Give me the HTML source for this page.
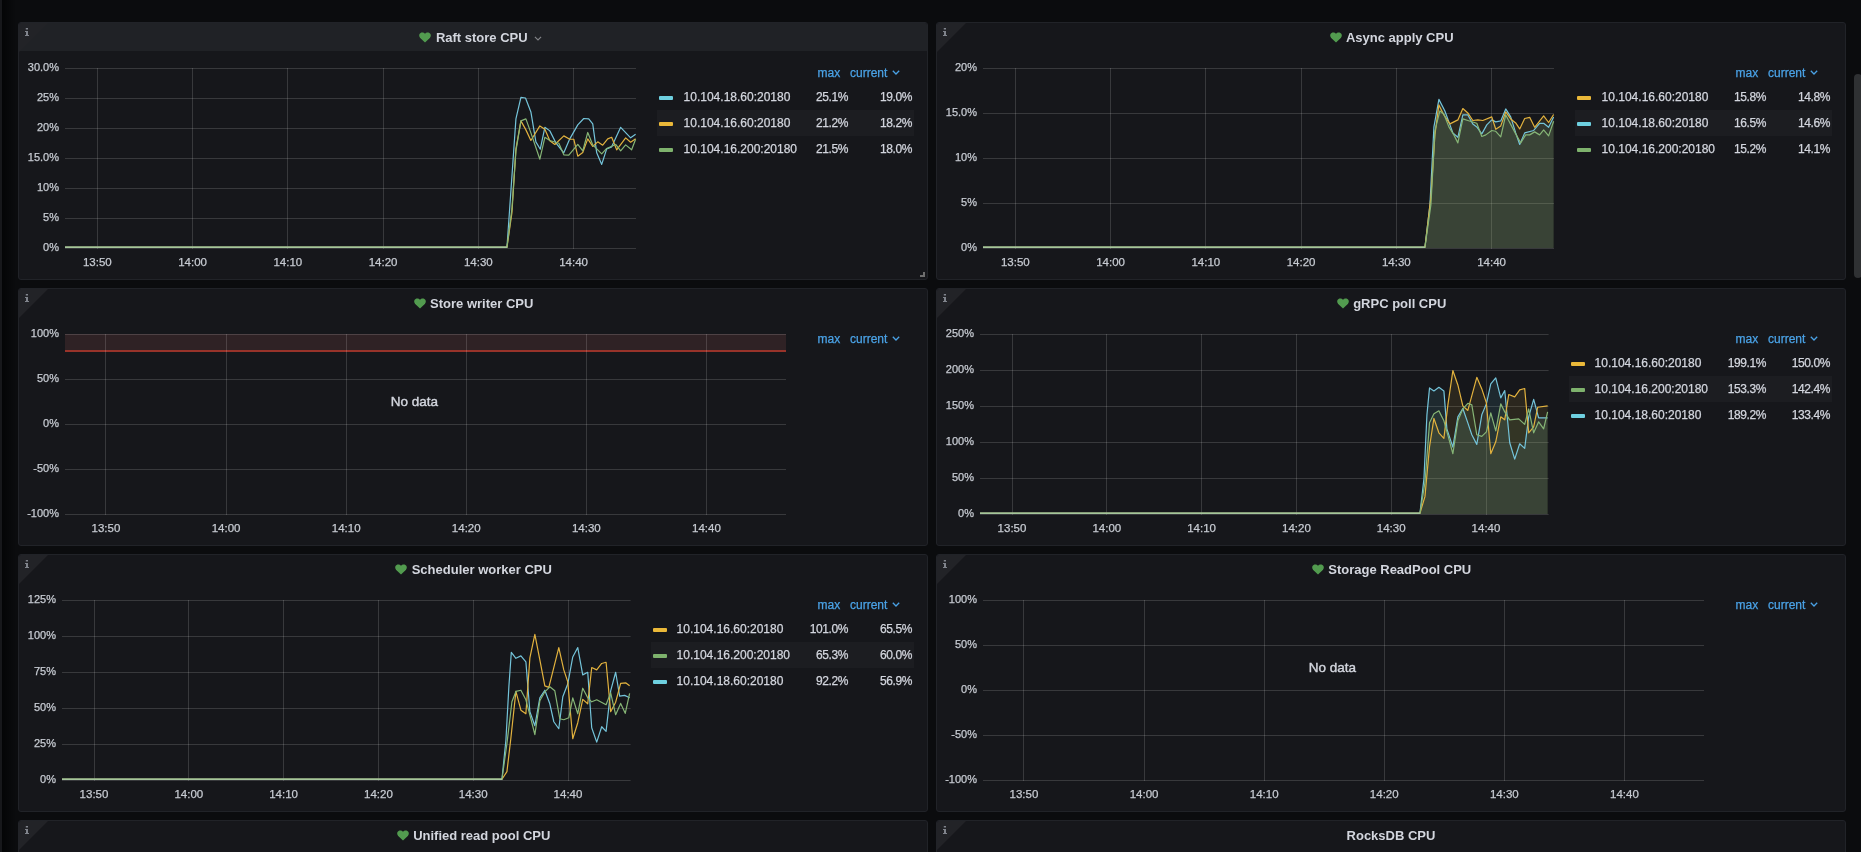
<!DOCTYPE html>
<html><head><meta charset="utf-8"><style>
html,body{margin:0;padding:0;}
body{will-change:transform;-webkit-text-stroke-width:0.25px;width:1861px;height:852px;overflow:hidden;background:#0b0c0e;position:relative;font-family:"Liberation Sans",sans-serif;}
.strip{position:absolute;left:0;top:0;width:2px;height:852px;background:#17181b;}
.sb{position:absolute;left:1854px;top:74px;width:8px;height:204px;background:#2f3133;border-radius:4px;}
.p{position:absolute;width:908px;height:256px;background:#16171b;border:1px solid #212328;border-radius:3px;overflow:hidden;}
.hov{position:absolute;left:0;top:0;width:908px;height:28px;background:#202226;}
.tri{position:absolute;left:0;top:0;width:0;height:0;border-top:29px solid #222327;border-right:29px solid transparent;}
.info{position:absolute;left:6px;top:5px;}
.rz{position:absolute;background:#6e6e6e;}
.title{-webkit-text-stroke-width:0;position:absolute;left:0;top:5.6px;width:908px;text-align:center;font-weight:bold;font-size:13px;line-height:18px;color:#d3d6de;white-space:nowrap;}
.title svg{vertical-align:-1px;margin-right:5.5px;position:relative;left:1.1px;}
svg.ch{position:absolute;left:0;top:0;}
.lg{position:absolute;font-size:12px;line-height:14px;color:#d3d6de;white-space:nowrap;}
.lh{position:absolute;font-size:12px;line-height:14px;color:#4aa2e6;white-space:nowrap;}
.nd{-webkit-text-stroke-width:0.4px;position:absolute;font-size:13.5px;line-height:16px;color:#d3d6de;white-space:nowrap;}
.stripe{position:absolute;background:#1c1d21;}
.sw{position:absolute;width:14px;height:4px;border-radius:1px;}
.val{position:absolute;font-size:12px;line-height:14px;color:#d3d6de;white-space:nowrap;letter-spacing:-0.4px;text-align:right;}
</style></head><body>
<div class="strip"></div>
<div style="position:absolute;left:2px;top:0;width:14px;height:852px;background:linear-gradient(to right,#040506,#0b0c0e)"></div>
<div class="sb"></div>

<div class="p" style="left:18px;top:22px">
<div class="hov"></div>
<div class="rz" style="left:904px;top:249px;width:2px;height:5px"></div><div class="rz" style="left:901px;top:252px;width:5px;height:2px"></div>
<div class="tri"></div>
<svg class="info" width="5" height="9" viewBox="0 0 5 9"><rect x="0.8" y="0" width="2.2" height="1.5" fill="#80848c"/><path d="M0 3 H3 V7 H4 V8 H0 V7 H1 V4 H0 Z" fill="#80848c"/></svg>
<div class="title"><svg width="12" height="11" viewBox="0 0 12 11"><path d="M6 10.6 L1.2 5.9 C-0.3 4.4 -0.1 1.9 1.6 0.9 C3.1 0 4.9 0.5 6 1.8 C7.1 0.5 8.9 0 10.4 0.9 C12.1 1.9 12.3 4.4 10.8 5.9 Z" fill="#529b4f"/></svg>Raft store CPU</div><svg width="8" height="5" viewBox="0 0 8 5" style="position:absolute;left:514.6px;top:12.5px"><path d="M0.9 0.9 L4 3.9 L7.1 0.9" stroke="#85868a" stroke-width="1.1" fill="none"/></svg>
<svg class="ch" width="908" height="256">
<rect x="46" y="45" width="571" height="1" fill="rgba(255,255,255,0.15)"/>
<rect x="46" y="75" width="571" height="1" fill="rgba(255,255,255,0.15)"/>
<rect x="46" y="105" width="571" height="1" fill="rgba(255,255,255,0.15)"/>
<rect x="46" y="135" width="571" height="1" fill="rgba(255,255,255,0.15)"/>
<rect x="46" y="165" width="571" height="1" fill="rgba(255,255,255,0.15)"/>
<rect x="46" y="195" width="571" height="1" fill="rgba(255,255,255,0.15)"/>
<rect x="46" y="225" width="571" height="1" fill="rgba(255,255,255,0.15)"/>
<rect x="78" y="45" width="1" height="181" fill="rgba(255,255,255,0.15)"/>
<rect x="173" y="45" width="1" height="181" fill="rgba(255,255,255,0.15)"/>
<rect x="268" y="45" width="1" height="181" fill="rgba(255,255,255,0.15)"/>
<rect x="364" y="45" width="1" height="181" fill="rgba(255,255,255,0.15)"/>
<rect x="459" y="45" width="1" height="181" fill="rgba(255,255,255,0.15)"/>
<rect x="554" y="45" width="1" height="181" fill="rgba(255,255,255,0.15)"/>
</svg>
<div class="lg" style="left:0;width:40px;top:36.5px;text-align:right;font-size:11px;color:#c7cbd2">30.0%</div>
<div class="lg" style="left:0;width:40px;top:66.5px;text-align:right;font-size:11px;color:#c7cbd2">25%</div>
<div class="lg" style="left:0;width:40px;top:96.5px;text-align:right;font-size:11px;color:#c7cbd2">20%</div>
<div class="lg" style="left:0;width:40px;top:126.5px;text-align:right;font-size:11px;color:#c7cbd2">15.0%</div>
<div class="lg" style="left:0;width:40px;top:156.5px;text-align:right;font-size:11px;color:#c7cbd2">10%</div>
<div class="lg" style="left:0;width:40px;top:186.5px;text-align:right;font-size:11px;color:#c7cbd2">5%</div>
<div class="lg" style="left:0;width:40px;top:216.5px;text-align:right;font-size:11px;color:#c7cbd2">0%</div>
<div class="lg" style="left:58.3px;width:40px;top:231.5px;text-align:center;font-size:11.5px;color:#c7cbd2">13:50</div>
<div class="lg" style="left:153.55px;width:40px;top:231.5px;text-align:center;font-size:11.5px;color:#c7cbd2">14:00</div>
<div class="lg" style="left:248.8px;width:40px;top:231.5px;text-align:center;font-size:11.5px;color:#c7cbd2">14:10</div>
<div class="lg" style="left:344.05px;width:40px;top:231.5px;text-align:center;font-size:11.5px;color:#c7cbd2">14:20</div>
<div class="lg" style="left:439.3px;width:40px;top:231.5px;text-align:center;font-size:11.5px;color:#c7cbd2">14:30</div>
<div class="lg" style="left:534.55px;width:40px;top:231.5px;text-align:center;font-size:11.5px;color:#c7cbd2">14:40</div>
<div class="lh" style="left:798.5px;top:43.1px">max</div>
<div class="lh" style="left:831px;top:43.1px">current<svg width="8" height="5" viewBox="0 0 8 5" style="margin-left:5px;vertical-align:2px"><path d="M0.8 0.8 L4 4 L7.2 0.8" stroke="#4aa2e6" stroke-width="1.3" fill="none"/></svg></div>
<div class="stripe" style="left:638px;top:87px;width:257px;height:26px"></div>
<div class="sw" style="left:640px;top:72.5px;background:#6ED0E0"></div>
<div class="lg" style="left:664.6px;top:67px">10.104.18.60:20180</div>
<div class="val" style="left:729px;width:100px;top:67px">25.1%</div>
<div class="val" style="left:793px;width:100px;top:67px">19.0%</div>
<div class="sw" style="left:640px;top:98.5px;background:#EAB839"></div>
<div class="lg" style="left:664.6px;top:93px">10.104.16.60:20180</div>
<div class="val" style="left:729px;width:100px;top:93px">21.2%</div>
<div class="val" style="left:793px;width:100px;top:93px">18.2%</div>
<div class="sw" style="left:640px;top:124.5px;background:#7EB26D"></div>
<div class="lg" style="left:664.6px;top:119px">10.104.16.200:20180</div>
<div class="val" style="left:729px;width:100px;top:119px">21.5%</div>
<div class="val" style="left:793px;width:100px;top:119px">18.0%</div>
</div>
<svg style="position:absolute;left:0;top:0;pointer-events:none" width="1861" height="852">
<path d="M65 247.25 L506.96 247.25 L515.93 118.91 L520.92 97.37 L525.51 97.97 L530.89 111.93 L535.88 141.85 L540.27 149.23 L544.86 127.29 L549.84 130.88 L555.83 142.85 L563.81 152.82 L569.79 138.86 L577.77 124.9 L583.76 118.51 L588.74 118.91 L592.73 123.9 L596.72 152.82 L601.71 164.39 L606.7 148.83 L611.68 146.84 L620.66 127.29 L630.63 137.86 L635.62 134.27" fill="none" stroke="#74c4da" stroke-width="1.2" stroke-linejoin="round"/>
<path d="M65 247.25 L506.96 247.25 L511.94 212.67 L515.93 148.83 L520.92 120.91 L525.91 129.88 L530.89 140.46 L539.87 125.89 L544.86 129.28 L549.84 140.85 L554.83 144.45 L563.81 135.87 L569.79 139.26 L573.78 139.26 L577.77 156.21 L582.76 152.42 L587.75 138.86 L592.73 146.44 L597.72 141.85 L602.71 145.24 L607.69 138.86 L611.68 137.26 L616.67 149.83 L625.65 137.86 L630.63 142.25 L635.62 138.86" fill="none" stroke="#e2b23e" stroke-width="1.2" stroke-linejoin="round"/>
<path d="M65 247.25 L506.96 247.25 L511.94 208.68 L515.93 150.83 L520.92 120.91 L525.91 118.91 L530.89 132.88 L539.87 159.21 L544.86 137.26 L549.84 140.46 L558.82 143.25 L563.81 154.82 L568.8 155.22 L577.77 144.45 L582.76 150.83 L587.75 132.48 L592.73 144.84 L601.71 153.82 L606.7 148.44 L615.67 144.45 L620.66 150.83 L625.65 144.84 L631.63 149.83 L635.62 139.26" fill="none" stroke="#86b576" stroke-width="1.2" stroke-linejoin="round"/>
<path d="M65 247.25 H506.96" stroke="#a5c69c" stroke-width="1.6" fill="none"/>
</svg>
<div class="p" style="left:936px;top:22px">
<div class="tri"></div>
<svg class="info" width="5" height="9" viewBox="0 0 5 9"><rect x="0.8" y="0" width="2.2" height="1.5" fill="#80848c"/><path d="M0 3 H3 V7 H4 V8 H0 V7 H1 V4 H0 Z" fill="#80848c"/></svg>
<div class="title"><svg width="12" height="11" viewBox="0 0 12 11"><path d="M6 10.6 L1.2 5.9 C-0.3 4.4 -0.1 1.9 1.6 0.9 C3.1 0 4.9 0.5 6 1.8 C7.1 0.5 8.9 0 10.4 0.9 C12.1 1.9 12.3 4.4 10.8 5.9 Z" fill="#529b4f"/></svg>Async apply CPU</div>
<svg class="ch" width="908" height="256">
<rect x="46" y="45" width="571" height="1" fill="rgba(255,255,255,0.15)"/>
<rect x="46" y="90" width="571" height="1" fill="rgba(255,255,255,0.15)"/>
<rect x="46" y="135" width="571" height="1" fill="rgba(255,255,255,0.15)"/>
<rect x="46" y="180" width="571" height="1" fill="rgba(255,255,255,0.15)"/>
<rect x="46" y="225" width="571" height="1" fill="rgba(255,255,255,0.15)"/>
<rect x="78" y="45" width="1" height="181" fill="rgba(255,255,255,0.15)"/>
<rect x="173" y="45" width="1" height="181" fill="rgba(255,255,255,0.15)"/>
<rect x="268" y="45" width="1" height="181" fill="rgba(255,255,255,0.15)"/>
<rect x="364" y="45" width="1" height="181" fill="rgba(255,255,255,0.15)"/>
<rect x="459" y="45" width="1" height="181" fill="rgba(255,255,255,0.15)"/>
<rect x="554" y="45" width="1" height="181" fill="rgba(255,255,255,0.15)"/>
</svg>
<div class="lg" style="left:0;width:40px;top:36.5px;text-align:right;font-size:11px;color:#c7cbd2">20%</div>
<div class="lg" style="left:0;width:40px;top:81.5px;text-align:right;font-size:11px;color:#c7cbd2">15.0%</div>
<div class="lg" style="left:0;width:40px;top:126.5px;text-align:right;font-size:11px;color:#c7cbd2">10%</div>
<div class="lg" style="left:0;width:40px;top:171.5px;text-align:right;font-size:11px;color:#c7cbd2">5%</div>
<div class="lg" style="left:0;width:40px;top:216.5px;text-align:right;font-size:11px;color:#c7cbd2">0%</div>
<div class="lg" style="left:58.3px;width:40px;top:231.5px;text-align:center;font-size:11.5px;color:#c7cbd2">13:50</div>
<div class="lg" style="left:153.55px;width:40px;top:231.5px;text-align:center;font-size:11.5px;color:#c7cbd2">14:00</div>
<div class="lg" style="left:248.8px;width:40px;top:231.5px;text-align:center;font-size:11.5px;color:#c7cbd2">14:10</div>
<div class="lg" style="left:344.05px;width:40px;top:231.5px;text-align:center;font-size:11.5px;color:#c7cbd2">14:20</div>
<div class="lg" style="left:439.3px;width:40px;top:231.5px;text-align:center;font-size:11.5px;color:#c7cbd2">14:30</div>
<div class="lg" style="left:534.55px;width:40px;top:231.5px;text-align:center;font-size:11.5px;color:#c7cbd2">14:40</div>
<div class="lh" style="left:798.5px;top:43.1px">max</div>
<div class="lh" style="left:831px;top:43.1px">current<svg width="8" height="5" viewBox="0 0 8 5" style="margin-left:5px;vertical-align:2px"><path d="M0.8 0.8 L4 4 L7.2 0.8" stroke="#4aa2e6" stroke-width="1.3" fill="none"/></svg></div>
<div class="stripe" style="left:638px;top:87px;width:257px;height:26px"></div>
<div class="sw" style="left:640px;top:72.5px;background:#EAB839"></div>
<div class="lg" style="left:664.6px;top:67px">10.104.16.60:20180</div>
<div class="val" style="left:729px;width:100px;top:67px">15.8%</div>
<div class="val" style="left:793px;width:100px;top:67px">14.8%</div>
<div class="sw" style="left:640px;top:98.5px;background:#6ED0E0"></div>
<div class="lg" style="left:664.6px;top:93px">10.104.18.60:20180</div>
<div class="val" style="left:729px;width:100px;top:93px">16.5%</div>
<div class="val" style="left:793px;width:100px;top:93px">14.6%</div>
<div class="sw" style="left:640px;top:124.5px;background:#7EB26D"></div>
<div class="lg" style="left:664.6px;top:119px">10.104.16.200:20180</div>
<div class="val" style="left:729px;width:100px;top:119px">15.2%</div>
<div class="val" style="left:793px;width:100px;top:119px">14.1%</div>
</div>
<svg style="position:absolute;left:0;top:0;pointer-events:none" width="1861" height="852">
<path d="M983 248 L983 247.25 L1424.94 247.25 L1429.93 204.7 L1433.92 126.9 L1438.9 99.36 L1444.89 110.94 L1452.87 132.88 L1457.86 137.27 L1462.84 114.93 L1467.83 114.93 L1472.82 123.9 L1476.81 126.9 L1481.8 133.88 L1486.78 124.9 L1491.77 119.91 L1495.76 121.91 L1500.75 120.91 L1505.74 108.94 L1510.72 116.92 L1515.71 132.88 L1519.7 144.45 L1524.69 132.88 L1533.67 130.49 L1539.65 123.3 L1543.64 123.3 L1548.63 127.29 L1553.62 116.92 L1553.62 248 Z" fill="#6ED0E0" fill-opacity="0.1"/>
<path d="M983 248 L983 247.25 L1424.94 247.25 L1430.92 196.72 L1434.91 134.88 L1438.9 104.95 L1443.89 114.93 L1449.88 123.9 L1457.86 119.91 L1462.84 108.54 L1467.83 112.93 L1472.82 120.51 L1477.81 119.91 L1482.79 120.51 L1491.77 116.92 L1495.76 129.29 L1500.75 125.9 L1505.74 111.93 L1510.72 118.92 L1515.71 122.91 L1519.7 128.89 L1524.69 118.52 L1529.68 117.32 L1534.66 127.29 L1543.64 115.92 L1548.63 122.51 L1553.62 114.53 L1553.62 248 Z" fill="#EAB839" fill-opacity="0.1"/>
<path d="M983 248 L983 247.25 L1424.94 247.25 L1430.92 204.7 L1434.91 130.89 L1439.9 110.94 L1443.89 113.93 L1448.88 126.9 L1453.87 134.88 L1457.86 142.86 L1462.84 118.92 L1467.83 120.51 L1476.81 123.3 L1481.8 136.47 L1485.79 134.88 L1491.77 130.49 L1495.76 131.28 L1500.75 136.87 L1505.74 114.93 L1515.71 133.88 L1520.7 142.86 L1525.69 134.88 L1529.68 134.88 L1534.66 131.88 L1539.65 134.88 L1543.64 129.89 L1548.63 135.87 L1553.62 121.31 L1553.62 248 Z" fill="#7EB26D" fill-opacity="0.1"/>
<path d="M983 247.25 L1424.94 247.25 L1429.93 204.7 L1433.92 126.9 L1438.9 99.36 L1444.89 110.94 L1452.87 132.88 L1457.86 137.27 L1462.84 114.93 L1467.83 114.93 L1472.82 123.9 L1476.81 126.9 L1481.8 133.88 L1486.78 124.9 L1491.77 119.91 L1495.76 121.91 L1500.75 120.91 L1505.74 108.94 L1510.72 116.92 L1515.71 132.88 L1519.7 144.45 L1524.69 132.88 L1533.67 130.49 L1539.65 123.3 L1543.64 123.3 L1548.63 127.29 L1553.62 116.92" fill="none" stroke="#74c4da" stroke-width="1.2" stroke-linejoin="round"/>
<path d="M983 247.25 L1424.94 247.25 L1430.92 196.72 L1434.91 134.88 L1438.9 104.95 L1443.89 114.93 L1449.88 123.9 L1457.86 119.91 L1462.84 108.54 L1467.83 112.93 L1472.82 120.51 L1477.81 119.91 L1482.79 120.51 L1491.77 116.92 L1495.76 129.29 L1500.75 125.9 L1505.74 111.93 L1510.72 118.92 L1515.71 122.91 L1519.7 128.89 L1524.69 118.52 L1529.68 117.32 L1534.66 127.29 L1543.64 115.92 L1548.63 122.51 L1553.62 114.53" fill="none" stroke="#e2b23e" stroke-width="1.2" stroke-linejoin="round"/>
<path d="M983 247.25 L1424.94 247.25 L1430.92 204.7 L1434.91 130.89 L1439.9 110.94 L1443.89 113.93 L1448.88 126.9 L1453.87 134.88 L1457.86 142.86 L1462.84 118.92 L1467.83 120.51 L1476.81 123.3 L1481.8 136.47 L1485.79 134.88 L1491.77 130.49 L1495.76 131.28 L1500.75 136.87 L1505.74 114.93 L1515.71 133.88 L1520.7 142.86 L1525.69 134.88 L1529.68 134.88 L1534.66 131.88 L1539.65 134.88 L1543.64 129.89 L1548.63 135.87 L1553.62 121.31" fill="none" stroke="#86b576" stroke-width="1.2" stroke-linejoin="round"/>
<path d="M983 247.25 H1424.94" stroke="#a5c69c" stroke-width="1.6" fill="none"/>
</svg>
<div class="p" style="left:18px;top:288px">
<div class="tri"></div>
<svg class="info" width="5" height="9" viewBox="0 0 5 9"><rect x="0.8" y="0" width="2.2" height="1.5" fill="#80848c"/><path d="M0 3 H3 V7 H4 V8 H0 V7 H1 V4 H0 Z" fill="#80848c"/></svg>
<div class="title"><svg width="12" height="11" viewBox="0 0 12 11"><path d="M6 10.6 L1.2 5.9 C-0.3 4.4 -0.1 1.9 1.6 0.9 C3.1 0 4.9 0.5 6 1.8 C7.1 0.5 8.9 0 10.4 0.9 C12.1 1.9 12.3 4.4 10.8 5.9 Z" fill="#529b4f"/></svg>Store writer CPU</div>
<svg class="ch" width="908" height="256">
<rect x="46" y="45" width="721" height="18" fill="rgba(234,112,112,0.12)"/>
<rect x="46" y="61" width="721" height="2" fill="#98332a"/>
<rect x="46" y="45" width="721" height="1" fill="rgba(255,255,255,0.15)"/>
<rect x="46" y="90" width="721" height="1" fill="rgba(255,255,255,0.15)"/>
<rect x="46" y="135" width="721" height="1" fill="rgba(255,255,255,0.15)"/>
<rect x="46" y="180" width="721" height="1" fill="rgba(255,255,255,0.15)"/>
<rect x="46" y="225" width="721" height="1" fill="rgba(255,255,255,0.15)"/>
<rect x="86" y="45" width="1" height="181" fill="rgba(255,255,255,0.15)"/>
<rect x="207" y="45" width="1" height="181" fill="rgba(255,255,255,0.15)"/>
<rect x="327" y="45" width="1" height="181" fill="rgba(255,255,255,0.15)"/>
<rect x="447" y="45" width="1" height="181" fill="rgba(255,255,255,0.15)"/>
<rect x="567" y="45" width="1" height="181" fill="rgba(255,255,255,0.15)"/>
<rect x="687" y="45" width="1" height="181" fill="rgba(255,255,255,0.15)"/>
</svg>
<div class="lg" style="left:0;width:40px;top:36.5px;text-align:right;font-size:11px;color:#c7cbd2">100%</div>
<div class="lg" style="left:0;width:40px;top:81.5px;text-align:right;font-size:11px;color:#c7cbd2">50%</div>
<div class="lg" style="left:0;width:40px;top:126.5px;text-align:right;font-size:11px;color:#c7cbd2">0%</div>
<div class="lg" style="left:0;width:40px;top:171.5px;text-align:right;font-size:11px;color:#c7cbd2">-50%</div>
<div class="lg" style="left:0;width:40px;top:216.5px;text-align:right;font-size:11px;color:#c7cbd2">-100%</div>
<div class="lg" style="left:66.95px;width:40px;top:231.5px;text-align:center;font-size:11.5px;color:#c7cbd2">13:50</div>
<div class="lg" style="left:187.05px;width:40px;top:231.5px;text-align:center;font-size:11.5px;color:#c7cbd2">14:00</div>
<div class="lg" style="left:307.15px;width:40px;top:231.5px;text-align:center;font-size:11.5px;color:#c7cbd2">14:10</div>
<div class="lg" style="left:427.25px;width:40px;top:231.5px;text-align:center;font-size:11.5px;color:#c7cbd2">14:20</div>
<div class="lg" style="left:547.35px;width:40px;top:231.5px;text-align:center;font-size:11.5px;color:#c7cbd2">14:30</div>
<div class="lg" style="left:667.45px;width:40px;top:231.5px;text-align:center;font-size:11.5px;color:#c7cbd2">14:40</div>
<div class="lh" style="left:798.5px;top:43.1px">max</div>
<div class="lh" style="left:831px;top:43.1px">current<svg width="8" height="5" viewBox="0 0 8 5" style="margin-left:5px;vertical-align:2px"><path d="M0.8 0.8 L4 4 L7.2 0.8" stroke="#4aa2e6" stroke-width="1.3" fill="none"/></svg></div>
<div class="nd" style="left:345.5px;width:100px;top:104.5px;text-align:center">No data</div>
</div>
<div class="p" style="left:936px;top:288px">
<div class="tri"></div>
<svg class="info" width="5" height="9" viewBox="0 0 5 9"><rect x="0.8" y="0" width="2.2" height="1.5" fill="#80848c"/><path d="M0 3 H3 V7 H4 V8 H0 V7 H1 V4 H0 Z" fill="#80848c"/></svg>
<div class="title"><svg width="12" height="11" viewBox="0 0 12 11"><path d="M6 10.6 L1.2 5.9 C-0.3 4.4 -0.1 1.9 1.6 0.9 C3.1 0 4.9 0.5 6 1.8 C7.1 0.5 8.9 0 10.4 0.9 C12.1 1.9 12.3 4.4 10.8 5.9 Z" fill="#529b4f"/></svg>gRPC poll CPU</div>
<svg class="ch" width="908" height="256">
<rect x="43" y="45" width="568.6" height="1" fill="rgba(255,255,255,0.15)"/>
<rect x="43" y="81" width="568.6" height="1" fill="rgba(255,255,255,0.15)"/>
<rect x="43" y="117" width="568.6" height="1" fill="rgba(255,255,255,0.15)"/>
<rect x="43" y="153" width="568.6" height="1" fill="rgba(255,255,255,0.15)"/>
<rect x="43" y="189" width="568.6" height="1" fill="rgba(255,255,255,0.15)"/>
<rect x="43" y="225" width="568.6" height="1" fill="rgba(255,255,255,0.15)"/>
<rect x="75" y="45" width="1" height="181" fill="rgba(255,255,255,0.15)"/>
<rect x="169" y="45" width="1" height="181" fill="rgba(255,255,255,0.15)"/>
<rect x="264" y="45" width="1" height="181" fill="rgba(255,255,255,0.15)"/>
<rect x="359" y="45" width="1" height="181" fill="rgba(255,255,255,0.15)"/>
<rect x="454" y="45" width="1" height="181" fill="rgba(255,255,255,0.15)"/>
<rect x="549" y="45" width="1" height="181" fill="rgba(255,255,255,0.15)"/>
</svg>
<div class="lg" style="left:0;width:37px;top:36.5px;text-align:right;font-size:11px;color:#c7cbd2">250%</div>
<div class="lg" style="left:0;width:37px;top:72.5px;text-align:right;font-size:11px;color:#c7cbd2">200%</div>
<div class="lg" style="left:0;width:37px;top:108.5px;text-align:right;font-size:11px;color:#c7cbd2">150%</div>
<div class="lg" style="left:0;width:37px;top:144.5px;text-align:right;font-size:11px;color:#c7cbd2">100%</div>
<div class="lg" style="left:0;width:37px;top:180.5px;text-align:right;font-size:11px;color:#c7cbd2">50%</div>
<div class="lg" style="left:0;width:37px;top:216.5px;text-align:right;font-size:11px;color:#c7cbd2">0%</div>
<div class="lg" style="left:55.01px;width:40px;top:231.5px;text-align:center;font-size:11.5px;color:#c7cbd2">13:50</div>
<div class="lg" style="left:149.81px;width:40px;top:231.5px;text-align:center;font-size:11.5px;color:#c7cbd2">14:00</div>
<div class="lg" style="left:244.61px;width:40px;top:231.5px;text-align:center;font-size:11.5px;color:#c7cbd2">14:10</div>
<div class="lg" style="left:339.41px;width:40px;top:231.5px;text-align:center;font-size:11.5px;color:#c7cbd2">14:20</div>
<div class="lg" style="left:434.21px;width:40px;top:231.5px;text-align:center;font-size:11.5px;color:#c7cbd2">14:30</div>
<div class="lg" style="left:529.01px;width:40px;top:231.5px;text-align:center;font-size:11.5px;color:#c7cbd2">14:40</div>
<div class="lh" style="left:798.5px;top:43.1px">max</div>
<div class="lh" style="left:831px;top:43.1px">current<svg width="8" height="5" viewBox="0 0 8 5" style="margin-left:5px;vertical-align:2px"><path d="M0.8 0.8 L4 4 L7.2 0.8" stroke="#4aa2e6" stroke-width="1.3" fill="none"/></svg></div>
<div class="stripe" style="left:632px;top:87px;width:263px;height:26px"></div>
<div class="sw" style="left:634px;top:72.5px;background:#EAB839"></div>
<div class="lg" style="left:657.6px;top:67px">10.104.16.60:20180</div>
<div class="val" style="left:729px;width:100px;top:67px">199.1%</div>
<div class="val" style="left:793px;width:100px;top:67px">150.0%</div>
<div class="sw" style="left:634px;top:98.5px;background:#7EB26D"></div>
<div class="lg" style="left:657.6px;top:93px">10.104.16.200:20180</div>
<div class="val" style="left:729px;width:100px;top:93px">153.3%</div>
<div class="val" style="left:793px;width:100px;top:93px">142.4%</div>
<div class="sw" style="left:634px;top:124.5px;background:#6ED0E0"></div>
<div class="lg" style="left:657.6px;top:119px">10.104.18.60:20180</div>
<div class="val" style="left:729px;width:100px;top:119px">189.2%</div>
<div class="val" style="left:793px;width:100px;top:119px">133.4%</div>
</div>
<svg style="position:absolute;left:0;top:0;pointer-events:none" width="1861" height="852">
<path d="M980 514 L980 513.25 L1419.95 513.25 L1423.94 478.69 L1426.93 414.85 L1429.53 387.92 L1433.92 390.91 L1438.9 387.32 L1443.89 390.91 L1446.88 428.82 L1452.87 447.17 L1457.86 416.85 L1462.84 408.47 L1467.83 422.83 L1471.82 434.8 L1476.81 444.38 L1481.8 414.85 L1486.38 403.88 L1490.77 383.93 L1495.76 377.94 L1500.75 397.89 L1504.74 390.51 L1509.73 442.78 L1514.71 459.14 L1519.7 443.78 L1524.69 448.37 L1528.68 416.85 L1533.67 399.29 L1538.65 417.84 L1547.63 417.84 L1547.63 514 Z" fill="#6ED0E0" fill-opacity="0.1"/>
<path d="M980 514 L980 513.25 L1419.95 513.25 L1424.94 496.65 L1429.53 446.77 L1433.92 418.44 L1438.9 432.81 L1443.89 438.39 L1447.88 404.88 L1452.87 370.56 L1457.86 384.93 L1462.84 405.87 L1467.83 410.46 L1476.81 377.34 L1481.8 388.92 L1486.38 402.88 L1490.77 453.75 L1495.76 441.78 L1500.75 416.85 L1504.74 419.84 L1508.73 394.5 L1514.71 396.9 L1519.7 389.91 L1524.69 388.52 L1528.68 432.81 L1533.67 426.82 L1537.66 407.27 L1547.63 405.87 L1547.63 514 Z" fill="#EAB839" fill-opacity="0.1"/>
<path d="M980 514 L980 513.25 L1419.95 513.25 L1424.94 482.68 L1429.53 422.83 L1433.92 413.85 L1438.9 410.86 L1443.89 420.84 L1448.88 438.79 L1452.87 453.75 L1457.86 420.84 L1462.84 408.87 L1467.83 403.28 L1471.82 404.88 L1476.81 434.8 L1481.8 436.4 L1486.38 431.81 L1490.77 412.86 L1495.76 430.81 L1500.75 403.88 L1504.74 411.86 L1509.73 419.84 L1518.7 418.84 L1524.69 424.43 L1528.68 408.87 L1533.67 432.81 L1538.65 421.83 L1543.64 428.82 L1547.63 411.86 L1547.63 514 Z" fill="#7EB26D" fill-opacity="0.1"/>
<path d="M980 513.25 L1419.95 513.25 L1423.94 478.69 L1426.93 414.85 L1429.53 387.92 L1433.92 390.91 L1438.9 387.32 L1443.89 390.91 L1446.88 428.82 L1452.87 447.17 L1457.86 416.85 L1462.84 408.47 L1467.83 422.83 L1471.82 434.8 L1476.81 444.38 L1481.8 414.85 L1486.38 403.88 L1490.77 383.93 L1495.76 377.94 L1500.75 397.89 L1504.74 390.51 L1509.73 442.78 L1514.71 459.14 L1519.7 443.78 L1524.69 448.37 L1528.68 416.85 L1533.67 399.29 L1538.65 417.84 L1547.63 417.84" fill="none" stroke="#74c4da" stroke-width="1.2" stroke-linejoin="round"/>
<path d="M980 513.25 L1419.95 513.25 L1424.94 496.65 L1429.53 446.77 L1433.92 418.44 L1438.9 432.81 L1443.89 438.39 L1447.88 404.88 L1452.87 370.56 L1457.86 384.93 L1462.84 405.87 L1467.83 410.46 L1476.81 377.34 L1481.8 388.92 L1486.38 402.88 L1490.77 453.75 L1495.76 441.78 L1500.75 416.85 L1504.74 419.84 L1508.73 394.5 L1514.71 396.9 L1519.7 389.91 L1524.69 388.52 L1528.68 432.81 L1533.67 426.82 L1537.66 407.27 L1547.63 405.87" fill="none" stroke="#e2b23e" stroke-width="1.2" stroke-linejoin="round"/>
<path d="M980 513.25 L1419.95 513.25 L1424.94 482.68 L1429.53 422.83 L1433.92 413.85 L1438.9 410.86 L1443.89 420.84 L1448.88 438.79 L1452.87 453.75 L1457.86 420.84 L1462.84 408.87 L1467.83 403.28 L1471.82 404.88 L1476.81 434.8 L1481.8 436.4 L1486.38 431.81 L1490.77 412.86 L1495.76 430.81 L1500.75 403.88 L1504.74 411.86 L1509.73 419.84 L1518.7 418.84 L1524.69 424.43 L1528.68 408.87 L1533.67 432.81 L1538.65 421.83 L1543.64 428.82 L1547.63 411.86" fill="none" stroke="#86b576" stroke-width="1.2" stroke-linejoin="round"/>
<path d="M980 513.25 H1419.95" stroke="#a5c69c" stroke-width="1.6" fill="none"/>
</svg>
<div class="p" style="left:18px;top:554px">
<div class="tri"></div>
<svg class="info" width="5" height="9" viewBox="0 0 5 9"><rect x="0.8" y="0" width="2.2" height="1.5" fill="#80848c"/><path d="M0 3 H3 V7 H4 V8 H0 V7 H1 V4 H0 Z" fill="#80848c"/></svg>
<div class="title"><svg width="12" height="11" viewBox="0 0 12 11"><path d="M6 10.6 L1.2 5.9 C-0.3 4.4 -0.1 1.9 1.6 0.9 C3.1 0 4.9 0.5 6 1.8 C7.1 0.5 8.9 0 10.4 0.9 C12.1 1.9 12.3 4.4 10.8 5.9 Z" fill="#529b4f"/></svg>Scheduler worker CPU</div>
<svg class="ch" width="908" height="256">
<rect x="43" y="45" width="568.6" height="1" fill="rgba(255,255,255,0.15)"/>
<rect x="43" y="81" width="568.6" height="1" fill="rgba(255,255,255,0.15)"/>
<rect x="43" y="117" width="568.6" height="1" fill="rgba(255,255,255,0.15)"/>
<rect x="43" y="153" width="568.6" height="1" fill="rgba(255,255,255,0.15)"/>
<rect x="43" y="189" width="568.6" height="1" fill="rgba(255,255,255,0.15)"/>
<rect x="43" y="225" width="568.6" height="1" fill="rgba(255,255,255,0.15)"/>
<rect x="75" y="45" width="1" height="181" fill="rgba(255,255,255,0.15)"/>
<rect x="169" y="45" width="1" height="181" fill="rgba(255,255,255,0.15)"/>
<rect x="264" y="45" width="1" height="181" fill="rgba(255,255,255,0.15)"/>
<rect x="359" y="45" width="1" height="181" fill="rgba(255,255,255,0.15)"/>
<rect x="454" y="45" width="1" height="181" fill="rgba(255,255,255,0.15)"/>
<rect x="549" y="45" width="1" height="181" fill="rgba(255,255,255,0.15)"/>
</svg>
<div class="lg" style="left:0;width:37px;top:36.5px;text-align:right;font-size:11px;color:#c7cbd2">125%</div>
<div class="lg" style="left:0;width:37px;top:72.5px;text-align:right;font-size:11px;color:#c7cbd2">100%</div>
<div class="lg" style="left:0;width:37px;top:108.5px;text-align:right;font-size:11px;color:#c7cbd2">75%</div>
<div class="lg" style="left:0;width:37px;top:144.5px;text-align:right;font-size:11px;color:#c7cbd2">50%</div>
<div class="lg" style="left:0;width:37px;top:180.5px;text-align:right;font-size:11px;color:#c7cbd2">25%</div>
<div class="lg" style="left:0;width:37px;top:216.5px;text-align:right;font-size:11px;color:#c7cbd2">0%</div>
<div class="lg" style="left:55.01px;width:40px;top:231.5px;text-align:center;font-size:11.5px;color:#c7cbd2">13:50</div>
<div class="lg" style="left:149.81px;width:40px;top:231.5px;text-align:center;font-size:11.5px;color:#c7cbd2">14:00</div>
<div class="lg" style="left:244.61px;width:40px;top:231.5px;text-align:center;font-size:11.5px;color:#c7cbd2">14:10</div>
<div class="lg" style="left:339.41px;width:40px;top:231.5px;text-align:center;font-size:11.5px;color:#c7cbd2">14:20</div>
<div class="lg" style="left:434.21px;width:40px;top:231.5px;text-align:center;font-size:11.5px;color:#c7cbd2">14:30</div>
<div class="lg" style="left:529.01px;width:40px;top:231.5px;text-align:center;font-size:11.5px;color:#c7cbd2">14:40</div>
<div class="lh" style="left:798.5px;top:43.1px">max</div>
<div class="lh" style="left:831px;top:43.1px">current<svg width="8" height="5" viewBox="0 0 8 5" style="margin-left:5px;vertical-align:2px"><path d="M0.8 0.8 L4 4 L7.2 0.8" stroke="#4aa2e6" stroke-width="1.3" fill="none"/></svg></div>
<div class="stripe" style="left:632px;top:87px;width:263px;height:26px"></div>
<div class="sw" style="left:634px;top:72.5px;background:#EAB839"></div>
<div class="lg" style="left:657.6px;top:67px">10.104.16.60:20180</div>
<div class="val" style="left:729px;width:100px;top:67px">101.0%</div>
<div class="val" style="left:793px;width:100px;top:67px">65.5%</div>
<div class="sw" style="left:634px;top:98.5px;background:#7EB26D"></div>
<div class="lg" style="left:657.6px;top:93px">10.104.16.200:20180</div>
<div class="val" style="left:729px;width:100px;top:93px">65.3%</div>
<div class="val" style="left:793px;width:100px;top:93px">60.0%</div>
<div class="sw" style="left:634px;top:124.5px;background:#6ED0E0"></div>
<div class="lg" style="left:657.6px;top:119px">10.104.18.60:20180</div>
<div class="val" style="left:729px;width:100px;top:119px">92.2%</div>
<div class="val" style="left:793px;width:100px;top:119px">56.9%</div>
</div>
<svg style="position:absolute;left:0;top:0;pointer-events:none" width="1861" height="852">
<path d="M62 779.25 L501.95 779.25 L505.94 739.7 L508.93 685.84 L511.32 652.32 L515.91 658.3 L520.9 655.91 L525.89 661.9 L529.88 711.77 L534.86 725.74 L539.85 697.81 L544.84 690.22 L549.83 703.79 L553.82 721.75 L558.8 728.73 L562.79 696.81 L567.78 683.84 L572.77 656.91 L577.76 647.53 L582.74 674.86 L587.73 672.27 L591.72 727.73 L596.71 742.09 L601.7 726.73 L606.08 731.32 L610.67 690.82 L615.66 672.27 L619.65 696.21 L624.64 695.41 L629.63 697.81" fill="none" stroke="#74c4da" stroke-width="1.2" stroke-linejoin="round"/>
<path d="M62 779.25 L501.95 779.25 L506.93 771.62 L510.92 737.71 L515.91 691.42 L520.9 710.17 L525.89 713.77 L529.88 657.91 L534.86 634.36 L539.85 659.9 L544.84 685.84 L548.83 687.43 L558.8 647.53 L563.79 669.88 L567.78 681.85 L572.77 738.7 L577.76 722.74 L582.74 699.4 L587.73 703.79 L591.72 667.48 L596.71 669.88 L601.7 663.49 L606.08 662.29 L610.67 711.77 L615.66 702.19 L620.65 683.44 L625.64 682.84 L629.63 685.84" fill="none" stroke="#e2b23e" stroke-width="1.2" stroke-linejoin="round"/>
<path d="M62 779.25 L501.95 779.25 L506.93 743.69 L511.92 701.8 L515.91 691.42 L520.9 690.22 L525.89 699.8 L530.87 718.75 L534.86 734.71 L539.85 700.8 L544.84 691.82 L549.83 686.83 L554.81 690.82 L559.8 718.75 L563.79 719.75 L568.78 717.76 L572.77 697.81 L577.76 713.77 L582.74 688.23 L587.73 697.81 L591.72 701.8 L596.71 699.8 L606.08 704.79 L610.67 692.82 L615.66 714.76 L620.65 703.39 L625.24 713.37 L629.63 693.42" fill="none" stroke="#86b576" stroke-width="1.2" stroke-linejoin="round"/>
<path d="M62 779.25 H501.95" stroke="#a5c69c" stroke-width="1.6" fill="none"/>
</svg>
<div class="p" style="left:936px;top:554px">
<div class="tri"></div>
<svg class="info" width="5" height="9" viewBox="0 0 5 9"><rect x="0.8" y="0" width="2.2" height="1.5" fill="#80848c"/><path d="M0 3 H3 V7 H4 V8 H0 V7 H1 V4 H0 Z" fill="#80848c"/></svg>
<div class="title"><svg width="12" height="11" viewBox="0 0 12 11"><path d="M6 10.6 L1.2 5.9 C-0.3 4.4 -0.1 1.9 1.6 0.9 C3.1 0 4.9 0.5 6 1.8 C7.1 0.5 8.9 0 10.4 0.9 C12.1 1.9 12.3 4.4 10.8 5.9 Z" fill="#529b4f"/></svg>Storage ReadPool CPU</div>
<svg class="ch" width="908" height="256">
<rect x="46" y="45" width="721" height="1" fill="rgba(255,255,255,0.15)"/>
<rect x="46" y="90" width="721" height="1" fill="rgba(255,255,255,0.15)"/>
<rect x="46" y="135" width="721" height="1" fill="rgba(255,255,255,0.15)"/>
<rect x="46" y="180" width="721" height="1" fill="rgba(255,255,255,0.15)"/>
<rect x="46" y="225" width="721" height="1" fill="rgba(255,255,255,0.15)"/>
<rect x="86" y="45" width="1" height="181" fill="rgba(255,255,255,0.15)"/>
<rect x="207" y="45" width="1" height="181" fill="rgba(255,255,255,0.15)"/>
<rect x="327" y="45" width="1" height="181" fill="rgba(255,255,255,0.15)"/>
<rect x="447" y="45" width="1" height="181" fill="rgba(255,255,255,0.15)"/>
<rect x="567" y="45" width="1" height="181" fill="rgba(255,255,255,0.15)"/>
<rect x="687" y="45" width="1" height="181" fill="rgba(255,255,255,0.15)"/>
</svg>
<div class="lg" style="left:0;width:40px;top:36.5px;text-align:right;font-size:11px;color:#c7cbd2">100%</div>
<div class="lg" style="left:0;width:40px;top:81.5px;text-align:right;font-size:11px;color:#c7cbd2">50%</div>
<div class="lg" style="left:0;width:40px;top:126.5px;text-align:right;font-size:11px;color:#c7cbd2">0%</div>
<div class="lg" style="left:0;width:40px;top:171.5px;text-align:right;font-size:11px;color:#c7cbd2">-50%</div>
<div class="lg" style="left:0;width:40px;top:216.5px;text-align:right;font-size:11px;color:#c7cbd2">-100%</div>
<div class="lg" style="left:66.95px;width:40px;top:231.5px;text-align:center;font-size:11.5px;color:#c7cbd2">13:50</div>
<div class="lg" style="left:187.05px;width:40px;top:231.5px;text-align:center;font-size:11.5px;color:#c7cbd2">14:00</div>
<div class="lg" style="left:307.15px;width:40px;top:231.5px;text-align:center;font-size:11.5px;color:#c7cbd2">14:10</div>
<div class="lg" style="left:427.25px;width:40px;top:231.5px;text-align:center;font-size:11.5px;color:#c7cbd2">14:20</div>
<div class="lg" style="left:547.35px;width:40px;top:231.5px;text-align:center;font-size:11.5px;color:#c7cbd2">14:30</div>
<div class="lg" style="left:667.45px;width:40px;top:231.5px;text-align:center;font-size:11.5px;color:#c7cbd2">14:40</div>
<div class="lh" style="left:798.5px;top:43.1px">max</div>
<div class="lh" style="left:831px;top:43.1px">current<svg width="8" height="5" viewBox="0 0 8 5" style="margin-left:5px;vertical-align:2px"><path d="M0.8 0.8 L4 4 L7.2 0.8" stroke="#4aa2e6" stroke-width="1.3" fill="none"/></svg></div>
<div class="nd" style="left:345.5px;width:100px;top:104.5px;text-align:center">No data</div>
</div>
<div class="p" style="left:18px;top:820px">
<div class="tri"></div>
<svg class="info" width="5" height="9" viewBox="0 0 5 9"><rect x="0.8" y="0" width="2.2" height="1.5" fill="#80848c"/><path d="M0 3 H3 V7 H4 V8 H0 V7 H1 V4 H0 Z" fill="#80848c"/></svg>
<div class="title"><svg width="12" height="11" viewBox="0 0 12 11"><path d="M6 10.6 L1.2 5.9 C-0.3 4.4 -0.1 1.9 1.6 0.9 C3.1 0 4.9 0.5 6 1.8 C7.1 0.5 8.9 0 10.4 0.9 C12.1 1.9 12.3 4.4 10.8 5.9 Z" fill="#529b4f"/></svg>Unified read pool CPU</div>
</div>
<div class="p" style="left:936px;top:820px">
<div class="tri"></div>
<svg class="info" width="5" height="9" viewBox="0 0 5 9"><rect x="0.8" y="0" width="2.2" height="1.5" fill="#80848c"/><path d="M0 3 H3 V7 H4 V8 H0 V7 H1 V4 H0 Z" fill="#80848c"/></svg>
<div class="title">RocksDB CPU</div>
</div>
</body></html>
